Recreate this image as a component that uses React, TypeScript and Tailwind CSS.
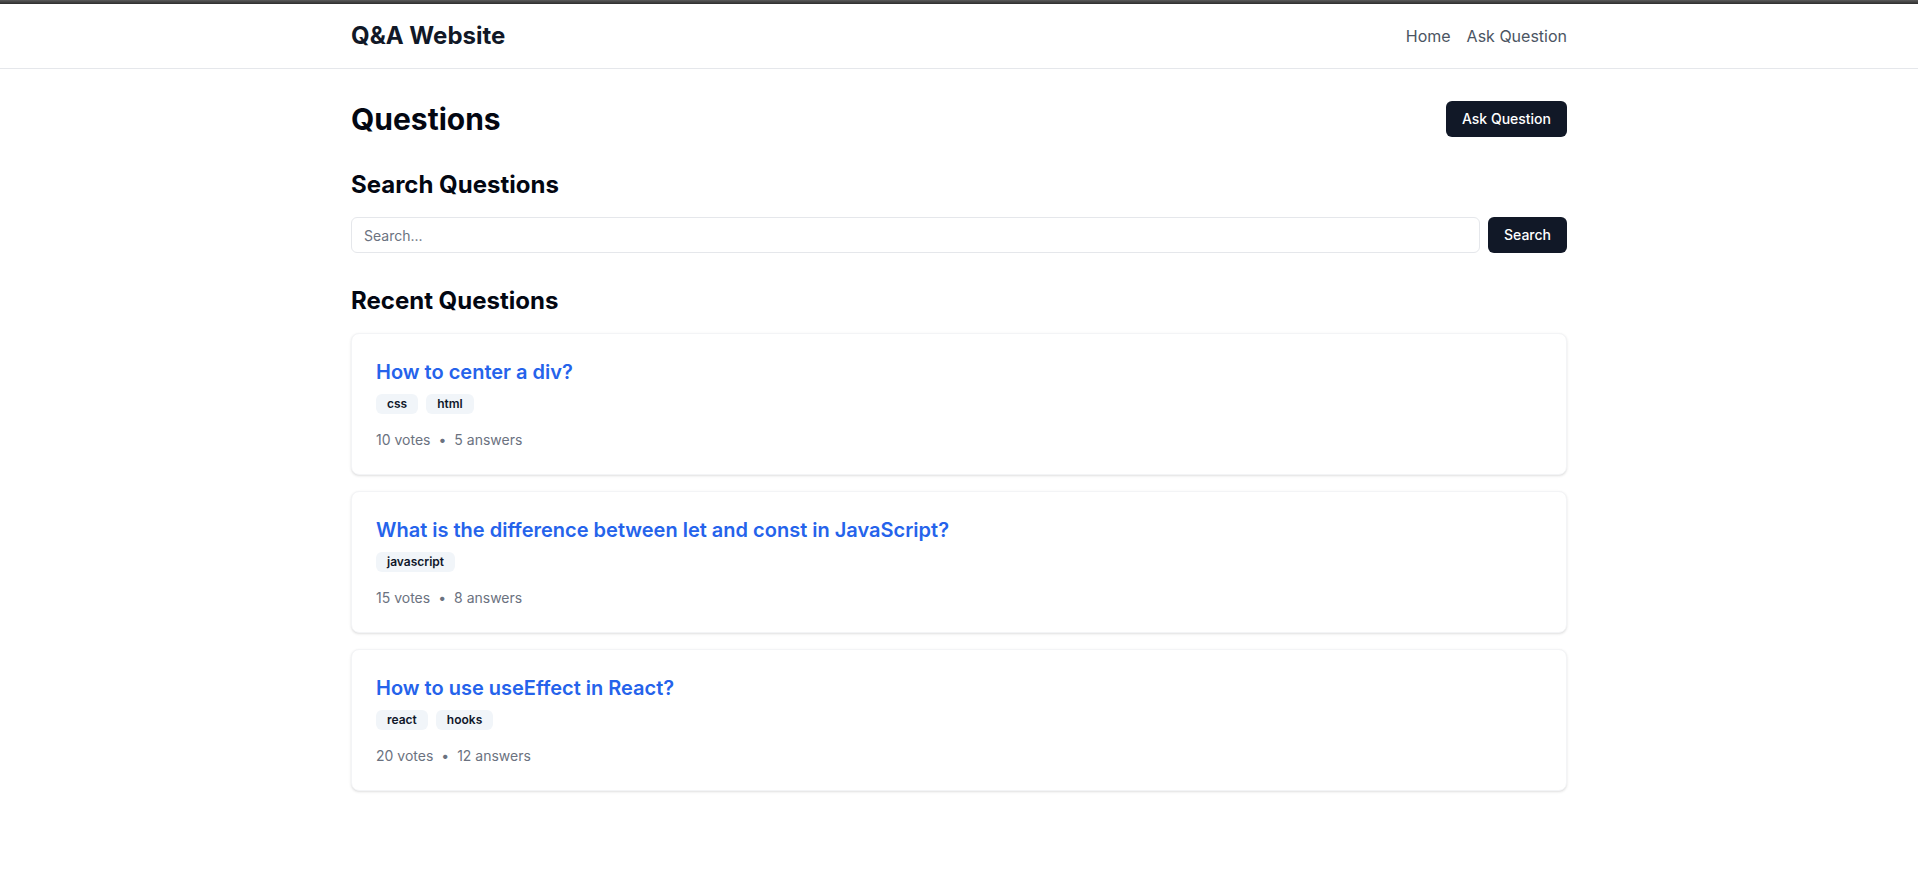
const questions = [
  { title: "How to center a div?", tags: ["css", "html"], votes: 10, answers: 5 },
  { title: "What is the difference between let and const in JavaScript?", tags: ["javascript"], votes: 15, answers: 8 },
  { title: "How to use useEffect in React?", tags: ["react", "hooks"], votes: 20, answers: 12 },
]

export default function App() {
  return (
    <div className="min-h-screen bg-white font-['Inter',sans-serif] text-[#030712]">
      <div className="h-1 bg-gradient-to-b from-[#5a5a5a] to-[#2e2e2e]" />
      <header className="border-b border-[#e5e7eb] bg-white">
        <div className="mx-auto flex h-16 max-w-7xl items-center justify-between px-8">
          <a href="#" className="text-2xl font-bold text-[#111827]">Q&amp;A Website</a>
          <nav className="flex items-center gap-4 text-base text-[#4b5563]">
            <a href="#">Home</a>
            <a href="#">Ask Question</a>
          </nav>
        </div>
      </header>

      <main className="mx-auto max-w-7xl px-8 py-8">
        <div className="mb-8 flex items-center justify-between">
          <h1 className="text-3xl font-bold">Questions</h1>
          <button className="h-9 rounded-md bg-[#111827] px-4 text-sm font-medium text-white">Ask Question</button>
        </div>

        <h2 className="mb-4 text-2xl font-bold">Search Questions</h2>
        <div className="mb-8 flex gap-2">
          <input
            placeholder="Search..."
            className="h-9 flex-1 rounded-md border border-[#e5e7eb] px-3 text-sm placeholder:text-[#6b7280]"
          />
          <button className="h-9 rounded-md bg-[#111827] px-4 text-sm font-medium text-white">Search</button>
        </div>

        <h2 className="mb-4 text-2xl font-bold">Recent Questions</h2>
        <div className="space-y-4">
          {questions.map((q) => (
            <div key={q.title} className="rounded-lg border border-[#f3f4f6] bg-white p-6 shadow-sm">
              <a href="#" className="mb-2 block text-xl font-semibold text-[#2563eb]">{q.title}</a>
              <div className="flex gap-2">
                {q.tags.map((t) => (
                  <span key={t} className="rounded-md bg-[#f1f5f9] px-[11px] py-0.5 text-xs font-semibold text-[#0f172a]">{t}</span>
                ))}
              </div>
              <div className="mt-4 flex items-center text-sm text-[#6b7280]">
                <span>{q.votes} votes</span>
                <span className="mx-2">•</span>
                <span>{q.answers} answers</span>
              </div>
            </div>
          ))}
        </div>
      </main>
    </div>
  )
}
